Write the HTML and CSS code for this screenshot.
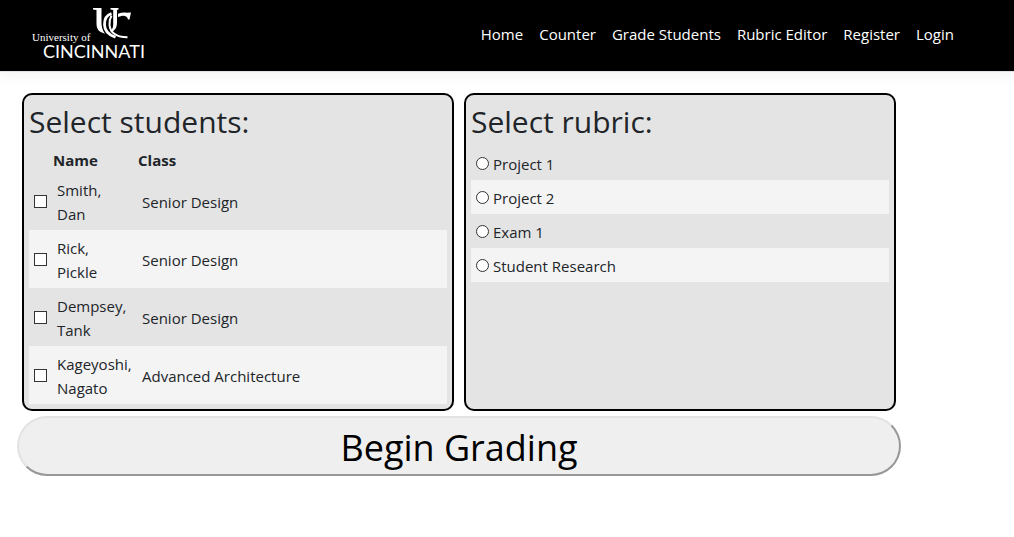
FILE: index.html
```html
<!DOCTYPE html>
<html lang="en">
<head>
<meta charset="utf-8">
<meta name="viewport" content="width=device-width, initial-scale=1">
<title>Grade Students</title>
<link rel="stylesheet" href="styles.css">
</head>
<body>
<header class="site-header">
  <a class="brand" href="#" aria-label="University of Cincinnati">
    <svg class="logo" width="116" height="56" viewBox="30 5 116 56">
      <text class="logo-small" x="32" y="41">University of</text>
      <text class="logo-large" x="43" y="58">CINCINNATI</text>
      <path fill="#fff" d="M93 8H101.500V23C101.500 27 102.500 29.500 105 31V33.500C99.500 32.500 96.500 29.500 96.500 23.500V10L93 9.500ZM110.500 8H118.500V9.500L117 10V23C117 27.500 115 30.500 111.500 32L110.500 31C112.500 29 113.200 27 113.200 24V10L110.500 9.500Z"/>
      <path fill="none" stroke="#000" stroke-width="4" d="M111 13.500C103.500 17 102.500 26 106 32"/>
      <path fill="none" stroke="#fff" stroke-width="2.800" d="M111.500 13.500C106.500 15 104.500 19.500 104.500 24.500C104.500 30.500 109 35 115.500 37.300"/>
      <path fill="none" stroke="#fff" stroke-width="2" d="M111.500 15.500C108.500 21 108.500 29.500 114 33.500C117 36 121 37.300 127.500 37.300"/>
      <path fill="#fff" d="M118 13.800C121 12.800 124 12.300 126.500 12.800L131 12.600L129.500 19.500H128C127.500 16.500 125.500 15.500 122.500 15.700L118 17Z"/>
    </svg>
  </a>
  <nav class="nav">
    <a href="#">Home</a>
    <a href="#">Counter</a>
    <a href="#">Grade Students</a>
    <a href="#">Rubric Editor</a>
    <a href="#">Register</a>
    <a href="#">Login</a>
  </nav>
</header>
<main class="page">
  <form class="grading">
    <div class="panels">
      <section class="panel">
        <h1>Select students:</h1>
        <table class="students">
          <thead>
            <tr><th class="pick"></th><th class="name">Name</th><th>Class</th></tr>
          </thead>
          <tbody>
            <tr><td><input type="checkbox" id="s1"></td><td><label for="s1">Smith,<br>Dan</label></td><td>Senior Design</td></tr>
            <tr><td><input type="checkbox" id="s2"></td><td><label for="s2">Rick,<br>Pickle</label></td><td>Senior Design</td></tr>
            <tr><td><input type="checkbox" id="s3"></td><td><label for="s3">Dempsey,<br>Tank</label></td><td>Senior Design</td></tr>
            <tr><td><input type="checkbox" id="s4"></td><td><label for="s4">Kageyoshi,<br>Nagato</label></td><td>Advanced Architecture</td></tr>
          </tbody>
        </table>
      </section>
      <section class="panel">
        <h1>Select rubric:</h1>
        <div class="rubrics">
          <label><input type="radio" name="rubric">Project 1</label>
          <label><input type="radio" name="rubric">Project 2</label>
          <label><input type="radio" name="rubric">Exam 1</label>
          <label><input type="radio" name="rubric">Student Research</label>
        </div>
      </section>
    </div>
    <button class="begin" type="button">Begin Grading</button>
  </form>
</main>
</body>
</html>
```
FILE: styles.css
```css
* { box-sizing: border-box; }
body {
  margin: 0;
  background: #fff;
  color: #212529;
  font: 15px/24px "Open Sans", "Noto Sans", sans-serif;
}
.site-header {
  display: flex;
  justify-content: space-between;
  align-items: flex-start;
  padding: 5px 60px 10px 30px;
  background: #000;
  border-bottom: 1px solid #dee2e6;
  box-shadow: 0 4px 12px rgba(0, 0, 0, 0.05);
}
.brand, .logo { display: block; }
.logo-small { font: 11px "Liberation Serif", serif; fill: #fff; }
.logo-large { font: 18px Lato, sans-serif; fill: #fff; }
.nav { display: flex; gap: 16px; padding-top: 17px; }
.nav a { color: #fff; text-decoration: none; }
.page { padding: 21px 113px 24px 17px; }
.grading { display: grid; gap: 5px; }
.panels {
  display: grid;
  grid-template-columns: 1fr 1fr;
  gap: 10px;
  padding: 0 5px;
}
.panel {
  padding: 5px;
  background: #e4e4e4;
  border: 2px solid #000;
  border-radius: 10px;
}
h1 {
  margin: 0 0 2px;
  font-size: 30px;
  font-weight: 400;
  line-height: 44px;
}
.students { width: 100%; border-collapse: collapse; table-layout: fixed; }
.students th { padding: 2px 1px 0; text-align: left; font-weight: 700; }
.students td { padding: 6px 5px 4px; }
.students .pick { width: 23px; }
.students .name { width: 85px; }
.students tbody tr:nth-child(even), .rubrics label:nth-child(even) { background: #f4f4f4; }
.rubrics label { display: flex; align-items: center; gap: 4px; padding: 6px 5px 4px; }
input {
  appearance: none;
  display: block;
  width: 13px;
  height: 13px;
  margin: 0 0 2px;
  background: #fff;
  border: 1px solid #333;
}
input[type="radio"] { border-radius: 50%; }
input:checked { background: #333; }
.begin {
  width: 100%;
  padding: 4px 0 0;
  color: #000;
  background: #efefef;
  border: 2px solid;
  border-color: #e3e3e3 #979797 #979797 #e3e3e3;
  border-radius: 30px;
  font: 36px/52px "Open Sans", "Noto Sans", sans-serif;
}
```
